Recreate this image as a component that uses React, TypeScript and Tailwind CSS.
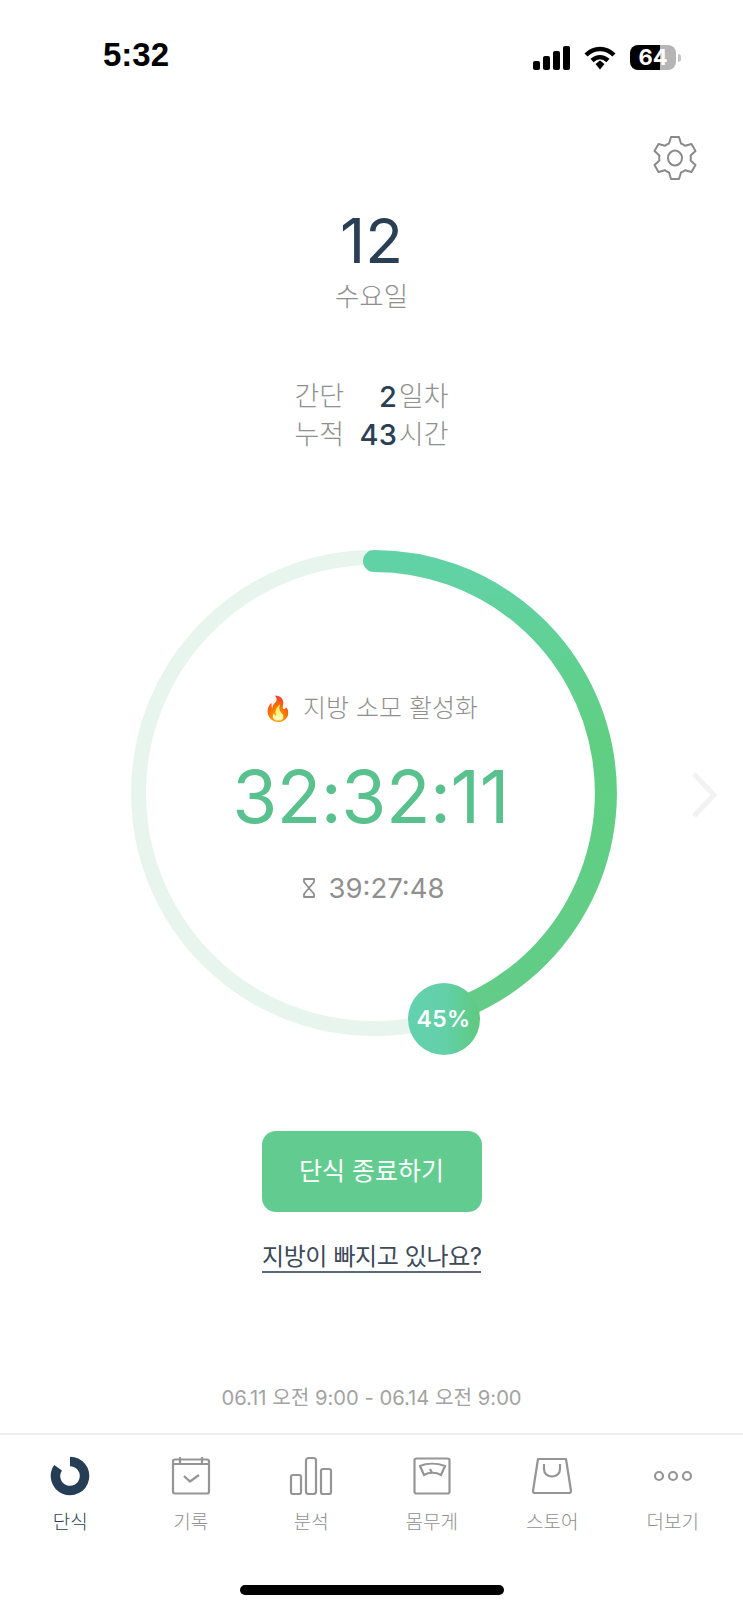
import React from 'react';

const tabs = [
  { label: '단식', active: true, icon: <Donut /> },
  { label: '기록', icon: <CalendarIcon /> },
  { label: '분석', icon: <BarsIcon /> },
  { label: '몸무게', icon: <ScaleIcon /> },
  { label: '스토어', icon: <BagIcon /> },
  { label: '더보기', icon: <DotsIcon /> },
];

function Donut() {
  return (
    <svg width="40" height="40" viewBox="0 0 40 40" fill="none">
      <path d="M20 5.5A14.5 14.5 0 1 1 8.1 11.7" stroke="#263e55" strokeWidth="9.5" />
    </svg>
  );
}

function CalendarIcon() {
  return (
    <svg width="40" height="40" viewBox="0 0 40 40" fill="none" stroke="#959595" strokeWidth="2.2">
      <rect x="2" y="3.5" width="36" height="34" rx="2" />
      <path d="M2 8H38M9 1V7M31 1V7M13 20L19 25.5L28 19" />
    </svg>
  );
}

function BarsIcon() {
  return (
    <svg width="44" height="40" viewBox="0 0 44 40" fill="none" stroke="#959595" strokeWidth="2.2">
      <rect x="2" y="19" width="10" height="19" rx="2" />
      <rect x="17" y="2" width="10" height="36" rx="2.5" />
      <rect x="32" y="13" width="10" height="25" rx="2" />
    </svg>
  );
}

function ScaleIcon() {
  return (
    <svg width="38" height="38" viewBox="0 0 38 38" fill="none" stroke="#959595" strokeWidth="2.2">
      <rect x="1.5" y="1.5" width="35" height="35" rx="2" />
      <path d="M7 9C14 6 24 6 32 9L28 18C23 15 16 15 11 18Z" />
      <path d="M17 12L19 16" />
    </svg>
  );
}

function BagIcon() {
  return (
    <svg width="42" height="38" viewBox="0 0 42 38" fill="none" stroke="#959595" strokeWidth="2.2">
      <path d="M7 2H35L40 34C40 35.5 39 36 38 36H4C3 36 2 35.5 2 34Z" strokeLinejoin="round" />
      <path d="M13 7V12C13 22 29 22 29 12V7" />
    </svg>
  );
}

function DotsIcon() {
  return (
    <svg width="40" height="14" viewBox="0 0 40 14" fill="none" stroke="#959595" strokeWidth="2.2">
      <circle cx="6" cy="7" r="4" />
      <circle cx="20" cy="7" r="4" />
      <circle cx="34" cy="7" r="4" />
    </svg>
  );
}

function StatusBar() {
  return (
    <div className="flex h-[96px] items-end justify-between pb-[23px] pl-[103px] pr-[62px]">
      <span className="text-[33px] leading-[36px] font-bold text-black [font-family:'Liberation_Sans',sans-serif]">5:32</span>
      <div className="flex items-center gap-[14px] pb-[3px]">
        <svg width="37" height="24" viewBox="0 0 37 24" fill="#000">
          <rect x="0" y="15" width="7" height="9" rx="2" />
          <rect x="10" y="10" width="7" height="14" rx="2" />
          <rect x="20" y="5" width="7" height="19" rx="2" />
          <rect x="30" y="0" width="7" height="24" rx="2" />
        </svg>
        <svg width="32" height="24" viewBox="0 0 32 24" fill="none" stroke="#000">
          <path d="M2 9C10 1 22 1 30 9" strokeWidth="4.5" />
          <path d="M8 14.5C13 10 19 10 24 14.5" strokeWidth="4.5" />
          <path d="M11.5 18L16 14.5L20.5 18L16 23.5Z" fill="#000" stroke="none" />
        </svg>
        <div className="flex items-center gap-[2px]">
          <div className="relative flex h-[25px] w-[46px] items-center justify-center rounded-[8px] bg-gradient-to-r from-black from-65% to-[#b5b5b5] to-65%">
            <span className="text-[22px] leading-[25px] font-bold text-white [font-family:Inter,sans-serif]">64</span>
          </div>
          <div className="h-[8px] w-[3px] rounded-r-full bg-[#c4c4c4]" />
        </div>
      </div>
    </div>
  );
}

function Ring() {
  return (
    <div className="relative mx-auto h-[486px] w-[486px] translate-x-[2px]">
      <svg width="486" height="486" viewBox="0 0 486 486" fill="none">
        <defs>
          <linearGradient id="arc" x1="0" y1="0" x2="0" y2="1">
            <stop offset="0" stopColor="#61d2a6" />
            <stop offset="0.4" stopColor="#60cf82" />
            <stop offset="1" stopColor="#62cc88" />
          </linearGradient>
        </defs>
        <circle cx="243" cy="243" r="235.5" stroke="#e7f5ee" strokeWidth="15" />
        <path
          d="M243 11A232 232 0 0 1 314.7 463.6"
          stroke="url(#arc)"
          strokeWidth="22"
          strokeLinecap="round"
        />
      </svg>
      <div className="absolute inset-0 flex flex-col items-center pr-[6px]">
        <div className="mt-[139px] flex h-[40px] items-center gap-[10px] text-[25px] font-light text-[#8f8f8f]">
          <span className="text-[24px] leading-none [font-family:'Noto_Color_Emoji',sans-serif]">🔥</span>
          <span>지방 소모 활성화</span>
        </div>
        <div className="mt-[20px] text-[73px] leading-[96px] font-normal tracking-[-0.5px] text-[#59c18d]">32:32:11</div>
        <div className="mt-[23px] flex items-center gap-[12px] pl-[6px] text-[27.5px] leading-[40px] text-[#8f8f8f]">
          <svg width="14" height="20" viewBox="0 0 14 20" fill="none" stroke="#8f8f8f" strokeWidth="1.8">
            <path d="M2 1H12V4L7 10L2 4ZM7 10L12 16V19H2V16Z" strokeLinejoin="round" />
          </svg>
          <span>39:27:48</span>
        </div>
      </div>
      <div className="absolute left-[277px] top-[433px] flex h-[72px] w-[72px] items-center justify-center rounded-full bg-gradient-to-r from-[#63d1ad] via-[#63d0aa] to-[#5fc97f] text-[23px] font-semibold tracking-[0.3px] text-white">
        45%
      </div>
    </div>
  );
}

export default function App() {
  return (
    <div className="flex h-[1611px] w-[743px] flex-col overflow-hidden bg-white [font-family:Inter,'Noto_Sans_CJK_KR',sans-serif]">
      <StatusBar />
      <div className="flex justify-end pr-[46px] pt-[39px]">
        <svg width="44" height="46" viewBox="0 0 44 46" fill="none" stroke="#8a8a8a" strokeWidth="2" strokeLinejoin="round">
          <path d="M18 2H26L28 8.5C29.5 9 31 10 32 10.8L38.5 9L42.5 16L37.6 20.6C37.9 22 37.9 24 37.6 25.4L42.5 30L38.5 37L32 35.2C31 36 29.5 37 28 37.5L26 44H18L16 37.5C14.5 37 13 36 12 35.2L5.5 37L1.5 30L6.4 25.4C6.1 24 6.1 22 6.4 20.6L1.5 16L5.5 9L12 10.8C13 10 14.5 9 16 8.5Z" />
          <ellipse cx="22" cy="23" rx="7" ry="7.5" />
        </svg>
      </div>

      <div className="mt-[22px] flex flex-col items-center">
        <div className="text-[62px] leading-[75px] text-[#2a3f54]">12</div>
        <div className="text-[26.5px] leading-[36px] font-light text-[#8f8f8f]">수요일</div>
      </div>

      <div className="mx-auto mt-[64px] grid w-[154px] grid-cols-[auto_1fr_auto] items-center text-[27px] leading-[38px] text-[#8f8f8f]">
        <span className="font-light">간단</span>
        <span className="pr-[2px] text-right text-[29px] font-medium text-[#2a3f54]">2</span>
        <span className="font-light">일차</span>
        <span className="font-light">누적</span>
        <span className="pr-[2px] text-right text-[29px] font-medium text-[#2a3f54]">43</span>
        <span className="font-light">시간</span>
      </div>

      <div className="relative mt-[96px]">
        <Ring />
        <svg className="absolute right-[25px] top-[220px]" width="28" height="50" viewBox="0 0 28 50" fill="none" stroke="#f2f2f2" strokeWidth="5">
          <path d="M4 4L24 25L4 46" />
        </svg>
      </div>

      <button className="mx-auto mt-[95px] flex h-[81px] w-[220px] items-center justify-center rounded-[14px] bg-[#62cc90] text-[25px] text-white">
        단식 종료하기
      </button>
      <div className="mx-auto mt-[21px] w-[219px] border-b-2 border-[#5b6878] pt-[10px] text-center text-[24px] leading-[28px] tracking-[-0.4px] whitespace-nowrap text-[#3c4a5a]">
        지방이 빠지고 있나요?
      </div>
      <div className="mt-[111px] text-center text-[20.2px] leading-[28px] text-[#a3a3a3]">06.11 오전 9:00 - 06.14 오전 9:00</div>

      <div className="mt-[21px] grid grid-cols-6 border-t-2 border-[#eeeeee] px-[10px] pt-[20px]">
        {tabs.map((t) => (
          <div key={t.label} className="flex flex-col items-center">
            <div className="flex h-[42px] items-center justify-center">{t.icon}</div>
            <span className={`mt-[13px] text-[19px] leading-[26px] font-light ${t.active ? 'text-[#2a3f54]' : 'text-[#8f8f8f]'}`}>{t.label}</span>
          </div>
        ))}
      </div>
      <div className="mx-auto mt-[49px] h-[10px] w-[264px] rounded-full bg-black" />
    </div>
  );
}
